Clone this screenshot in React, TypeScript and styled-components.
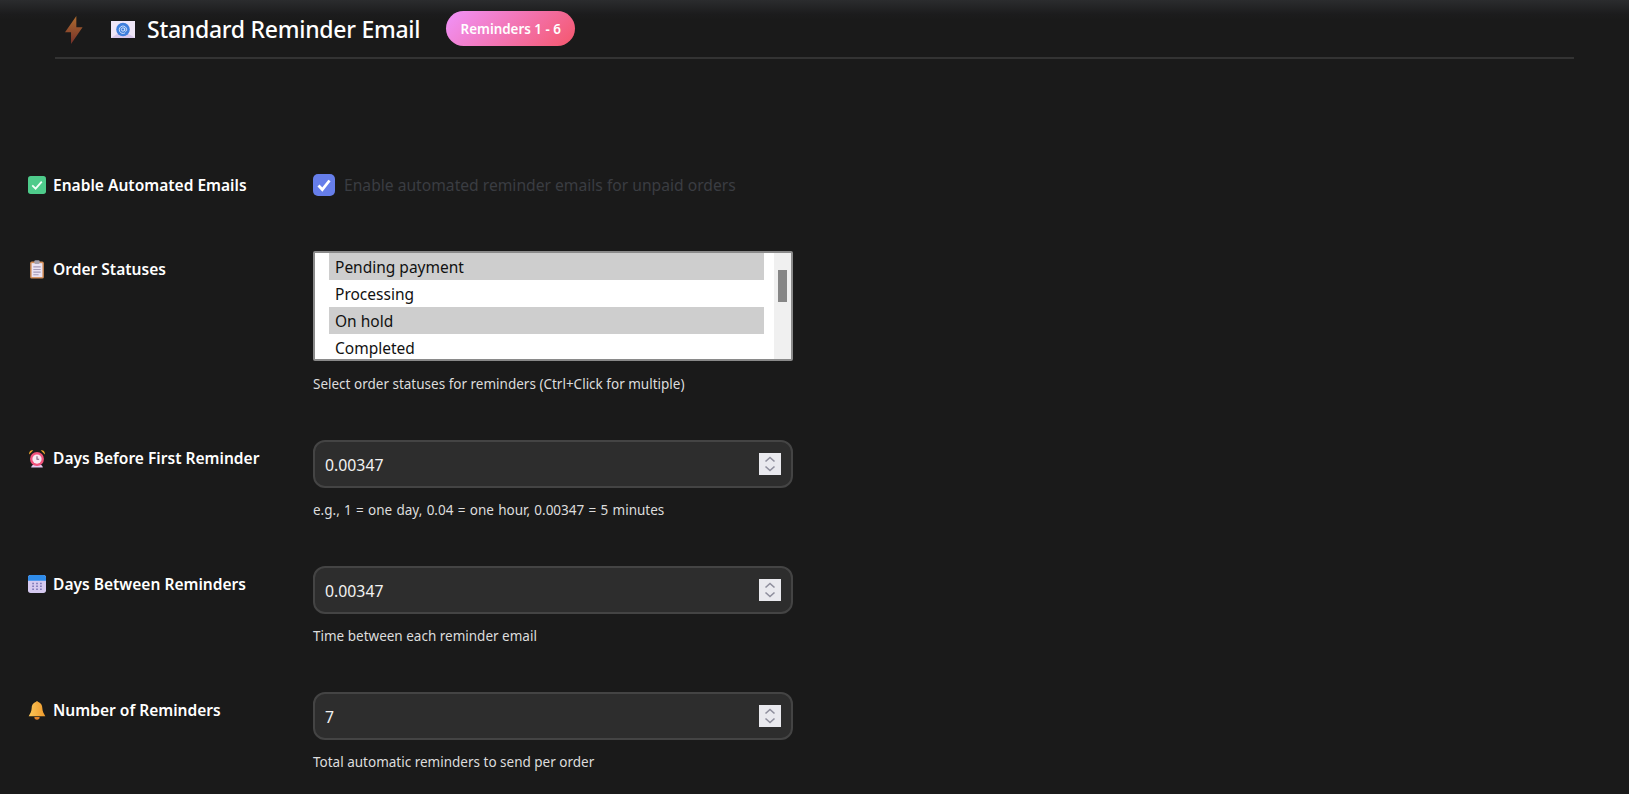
import styled, { createGlobalStyle } from "styled-components";

const GlobalStyle = createGlobalStyle`
  html, body {
    margin: 0;
    padding: 0;
    background: #1a1a1a;
    height: 100%;
    overflow: hidden;
  }
  * { box-sizing: border-box; }
  body {
    font-family: "Noto Sans", "Open Sans", "Liberation Sans", sans-serif;
    color: #fff;
  }
`;

const Page = styled.div`
  height: 794px;
  overflow: hidden;
  background: linear-gradient(180deg, #2b2c2e 0, #1c1c1d 14px, #1a1a1a 20px);
`;

const Header = styled.header`
  display: flex;
  align-items: center;
  height: 59px;
  margin: 0 55px;
  padding: 0 0 0 10px;
  border-bottom: 2px solid #333;
`;

const HeaderIcons = styled.div`
  display: flex;
  align-items: center;
  gap: 28px;
  margin-right: 12px;
  padding-top: 2px;
`;

const Title = styled.h1`
  margin: 0 26px 0 0;
  font-size: 23px;
  font-weight: 500;
  line-height: 32px;
  letter-spacing: -0.27px;
  color: #fff;
`;

const Badge = styled.span`
  display: inline-flex;
  align-items: center;
  justify-content: center;
  width: 129px;
  height: 35px;
  border-radius: 18px;
  background: linear-gradient(135deg, #f093fb 0%, #f5576c 100%);
  color: #fff;
  font-size: 13.4px;
  font-weight: 600;
`;

const Form = styled.div`
  padding: 115px 0 0 28px;
`;

const Row = styled.div<{ $gap: number }>`
  display: grid;
  grid-template-columns: 285px 480px;
  margin-bottom: ${p => p.$gap}px;
`;

const Label = styled.label<{ $top: number }>`
  display: flex;
  align-items: center;
  gap: 7px;
  height: 22px;
  margin-top: ${p => p.$top}px;
  font-size: 15.55px;
  font-weight: 600;
  color: #fff;
  white-space: nowrap;
`;

const CheckRow = styled.div`
  display: flex;
  align-items: center;
  gap: 9px;
  height: 22px;
`;

const CheckBox = styled.span`
  display: flex;
  align-items: center;
  justify-content: center;
  width: 22px;
  height: 22px;
  border-radius: 5px;
  background: #667eea;
`;

const CheckText = styled.span`
  font-size: 15.65px;
  color: #3a3d42;
  white-space: nowrap;
`;

const ListBox = styled.div`
  display: flex;
  height: 110px;
  border: 2px solid #8a8a8a;
  border-radius: 2px;
  background: #fff;
  overflow: hidden;
`;

const OptionList = styled.div`
  flex: 1;
  padding: 0 10px 0 14px;
`;

const Option = styled.div<{ $selected?: boolean }>`
  height: 27px;
  padding: 1px 0 0 6px;
  font-size: 15.5px;
  line-height: 27px;
  color: #111;
  background: ${p => (p.$selected ? "#cecece" : "transparent")};
`;

const ScrollTrack = styled.div`
  width: 17px;
  padding: 17px 4px 0 4px;
  background: #f0f0f0;
`;

const ScrollThumb = styled.div`
  height: 32px;
  background: #868686;
`;

const Hint = styled.div<{ $top: number; $wordSpacing?: number }>`
  margin-top: ${p => p.$top}px;
  font-size: 13.5px;
  line-height: 20px;
  word-spacing: ${p => p.$wordSpacing ?? 0}px;
  color: #ddd;
  white-space: nowrap;
`;

const NumberBox = styled.div`
  display: flex;
  align-items: center;
  justify-content: space-between;
  height: 48px;
  padding: 0 10px 0 10px;
  border: 2px solid #444;
  border-radius: 12px;
  background: #2d2d2d;
`;

const NumberValue = styled.input`
  width: 300px;
  padding: 2px 0 0;
  border: 0;
  outline: 0;
  background: transparent;
  color: #f2f2f2;
  font-family: inherit;
  font-size: 15.8px;
`;

const Spinner = styled.span`
  display: flex;
  align-items: center;
  justify-content: center;
  width: 22px;
  height: 22px;
  background: #e9e9ee;
`;

const SpinnerIcon = () => (
  <svg width="14" height="18" viewBox="0 0 14 18" fill="none" stroke="#8f8f9d" strokeWidth="1.6">
    <path d="M2.5 6.5 7 2.5l4.5 4" />
    <path d="M2.5 11.5 7 15.5l4.5-4" />
  </svg>
);

const BoltIcon = () => (
  <svg width="18" height="28" viewBox="0 0 17 28" preserveAspectRatio="none">
    <defs>
      <linearGradient id="bolt" x1="0" y1="0" x2="0" y2="1">
        <stop offset="0" stopColor="#ad6c2f" />
        <stop offset="1" stopColor="#763029" />
      </linearGradient>
    </defs>
    <path d="M10.7 0 0 16.3h5.7V28L16.6 11.3h-5.9z" fill="url(#bolt)" />
  </svg>
);

const MailIcon = () => (
  <svg width="24" height="17" viewBox="0 0 24 17">
    <rect width="24" height="17" fill="#efe6f7" />
    <path d="M0 17 12 9l12 8z" fill="#d9c9ec" />
    <circle cx="12" cy="8.5" r="6.8" fill="#3f7fdc" />
    <circle cx="12" cy="8.5" r="1.7" fill="none" stroke="#dce8fb" strokeWidth="0.9" />
    <path d="M13.7 6.8v2.6c0 1.3 2 1.3 2 -.6a3.7 3.7 0 1 0-1.6 3" fill="none" stroke="#dce8fb" strokeWidth="0.9" />
  </svg>
);

const GreenCheckIcon = () => (
  <svg width="18" height="18" viewBox="0 0 17 17">
    <rect width="17" height="17" rx="2.5" fill="#4ecb8b" />
    <path d="M4 8.8 7.2 12 13 5.3" fill="none" stroke="#f2fff8" strokeWidth="1.7" />
  </svg>
);

const ClipboardIcon = () => (
  <svg width="18" height="19" viewBox="0 0 17 18">
    <rect x="2" y="1.5" width="13" height="16" rx="1.5" fill="#d58f58" />
    <rect x="3.4" y="3" width="10.2" height="13.2" fill="#ebe3f3" />
    <rect x="6" y="0.3" width="5" height="3.4" rx="1" fill="#a5a0ac" />
    <path d="M5 6.5h7M5 9h7M5 11.5h7M5 14h5" stroke="#a79cb8" strokeWidth="1" />
  </svg>
);

const AlarmIcon = () => (
  <svg width="18" height="19" viewBox="0 0 17 18">
    <path d="M1 5.2C.6 2.6 2.6.6 5 1.2z" fill="#f0a92c" />
    <path d="M16 5.2C16.4 2.6 14.4.6 12 1.2z" fill="#f0a92c" />
    <path d="M3 17.5c.3-1.5 1.2-2.5 2.5-2.5h6c1.3 0 2.2 1 2.5 2.5z" fill="#e3c6ee" />
    <circle cx="8.5" cy="9.5" r="6.6" fill="#f0527b" />
    <circle cx="8.5" cy="9.5" r="4.4" fill="#f7e9f2" />
    <path d="M8.5 6.8v2.9h2" fill="none" stroke="#7b5a77" strokeWidth="1" />
  </svg>
);

const CalendarIcon = () => (
  <svg width="18" height="18" viewBox="0 0 17 17">
    <rect width="17" height="17" rx="2.5" fill="#d5c9ef" />
    <path d="M0 5.5V2.5A2.5 2.5 0 0 1 2.5 0h12A2.5 2.5 0 0 1 17 2.5v3z" fill="#2f8cea" />
    <path
      d="M4 8h1.6M7.7 8h1.6M11.4 8H13M4 10.7h1.6M7.7 10.7h1.6M11.4 10.7H13M4 13.4h1.6M7.7 13.4h1.6M11.4 13.4H13"
      stroke="#7d76b5"
      strokeWidth="1.4"
    />
  </svg>
);

const BellIcon = () => (
  <svg width="18" height="19" viewBox="0 0 17 18">
    <defs>
      <linearGradient id="bell" x1="0" y1="0" x2="1" y2="0">
        <stop offset="0" stopColor="#fbc558" />
        <stop offset="1" stopColor="#ee9a2c" />
      </linearGradient>
    </defs>
    <path d="M8.5 1C5.4 1 3.6 3.4 3.5 6.4 3.4 10 2 12 .6 14.4h15.8C15 12 13.6 10 13.5 6.4 13.4 3.4 11.6 1 8.5 1z" fill="url(#bell)" />
    <circle cx="8.5" cy="1.4" r="1.2" fill="#f2a93b" />
    <path d="M6 15.2h5a2.5 2.5 0 0 1-5 0z" fill="#e0812a" />
  </svg>
);

const NumberField = ({ value }: { value: string }) => (
  <NumberBox>
    <NumberValue type="text" defaultValue={value} readOnly />
    <Spinner>
      <SpinnerIcon />
    </Spinner>
  </NumberBox>
);

const App = () => {
  return (
    <>
      <GlobalStyle />
      <Page>
        <Header>
          <HeaderIcons>
            <BoltIcon />
            <MailIcon />
          </HeaderIcons>
          <Title>Standard Reminder Email</Title>
          <Badge>Reminders 1 - 6</Badge>
        </Header>
        <Form>
          <Row $gap={55}>
            <Label $top={0}>
              <GreenCheckIcon />
              Enable Automated Emails
            </Label>
            <CheckRow>
              <CheckBox>
                <svg width="16" height="16" viewBox="0 0 16 16" fill="none" stroke="#fff" strokeWidth="2.8">
                  <path d="M2.5 8.5 6.3 12.5 13.5 3.5" />
                </svg>
              </CheckBox>
              <CheckText>Enable automated reminder emails for unpaid orders</CheckText>
            </CheckRow>
          </Row>
          <Row $gap={46}>
            <Label $top={7}>
              <ClipboardIcon />
              Order Statuses
            </Label>
            <div>
              <ListBox>
                <OptionList>
                  <Option $selected>Pending payment</Option>
                  <Option>Processing</Option>
                  <Option $selected>On hold</Option>
                  <Option>Completed</Option>
                </OptionList>
                <ScrollTrack>
                  <ScrollThumb />
                </ScrollTrack>
              </ListBox>
              <Hint $top={13}>Select order statuses for reminders (Ctrl+Click for multiple)</Hint>
            </div>
          </Row>
          <Row $gap={46}>
            <Label $top={7}>
              <AlarmIcon />
              Days Before First Reminder
            </Label>
            <div>
              <NumberField value="0.00347" />
              <Hint $top={12} $wordSpacing={0.78}>e.g., 1 = one day, 0.04 = one hour, 0.00347 = 5 minutes</Hint>
            </div>
          </Row>
          <Row $gap={46}>
            <Label $top={7}>
              <CalendarIcon />
              Days Between Reminders
            </Label>
            <div>
              <NumberField value="0.00347" />
              <Hint $top={12}>Time between each reminder email</Hint>
            </div>
          </Row>
          <Row $gap={0}>
            <Label $top={7}>
              <BellIcon />
              Number of Reminders
            </Label>
            <div>
              <NumberField value="7" />
              <Hint $top={12}>Total automatic reminders to send per order</Hint>
            </div>
          </Row>
        </Form>
      </Page>
    </>
  );
};

export default App;
